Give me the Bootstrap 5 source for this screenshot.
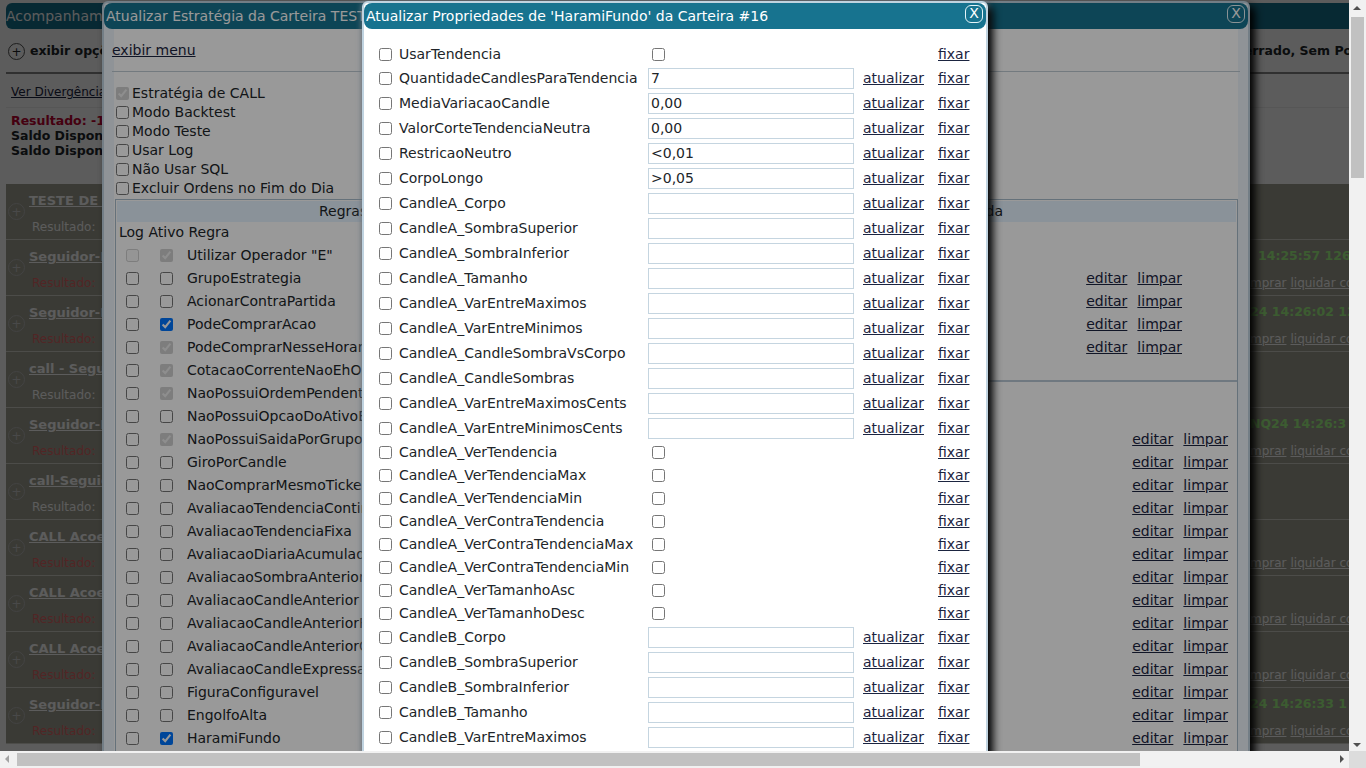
<!DOCTYPE html>
<html lang="pt-BR">

<head>
  <meta charset="UTF-8">
  <title>Acompanhamento</title>
  <link href="https://cdn.jsdelivr.net/npm/bootstrap@5.3.0/dist/css/bootstrap.min.css" rel="stylesheet">
  <style>
    html, body { height: 100%; overflow: hidden; }
    body { font-family: "DejaVu Sans", Verdana, sans-serif; font-size: 14px; color: #212529; background: #f1f1f1; }
    a { color: #1b2440; }
    input[type=checkbox] { width: 13px; height: 13px; margin: 0; flex: none; }

    #tela { width: 1366px; height: 768px; position: relative; overflow: hidden; }
    /* area visivel, sem as barras de rolagem */
    #area { width: 1349px; height: 751px; overflow: hidden; position: relative; background: #fff; }
    .veu { position: absolute; inset: 0; background: rgba(0, 0, 0, .4); }

    /* pagina de fundo */
    #pagina { width: 1349px; height: 751px; overflow: hidden; padding: 3px 0 0 6px; }
    .faixa-titulo { background: #17738f; color: #fff; height: 26px; line-height: 26px; border-radius: 6px 0 0 6px; white-space: nowrap; width: 1400px; }
    .barra-opcoes { height: 43px; padding: 2px 0 0 2px; font-weight: 700; white-space: nowrap; width: 1500px; font-size: 12.5px; }
    .barra-opcoes b { margin-left: 5px; }
    .status-mercado { margin-left: 1030px; }
    .bolinha { width: 17px; height: 17px; border: 1px solid #555; border-radius: 50%; display: inline-flex; align-items: center; justify-content: center; font-size: 12px; line-height: 1; font-weight: 400; flex: none; }
    .linha-grossa { height: 2px; background: #888; width: 1400px; }
    .divergencia { height: 34px; padding: 9px 0 0 5px; font-size: 12px; border-bottom: 1px solid #eee; }
    .resumo { height: 76px; padding: 5px 0 0 5px; font-size: 12.5px; font-weight: 700; line-height: 15px; }
    .resumo .negativo { color: #c00030; }
    .item-lista { height: 56px; width: 1400px; background: #a3a394; border-bottom: 1px solid #d4d4cc; color: #fff; position: relative; white-space: nowrap; }
    .item-lista .bolinha { position: absolute; left: 2px; top: 19px; border-color: #bbb; color: #ccc; }
    .item-lista .nome { position: absolute; left: 23px; top: 7px; font-size: 13px; font-weight: 700; }
    .item-lista .nome a { color: #fff; }
    .item-lista .res { position: absolute; left: 26px; top: 34px; font-size: 12px; color: #fff; }
    .item-lista .res.ruim { color: #e36a6a; }
    .item-lista .hora { position: absolute; top: 7px; font-size: 12.5px; font-weight: 700; color: #a8ff8a; }
    .item-lista .acoes { position: absolute; left: 1230px; top: 34px; font-size: 12px; }
    .item-lista .acoes a { color: #fff; margin-right: 4px; }

    /* janelas */
    .janela { position: absolute; top: 1px; bottom: -20px; background: #fff; border: 2px solid #c0d3e0; border-radius: 6px 6px 0 0; box-shadow: 5px 5px 8px #000, 0 0 6px #7d8b96; }
    .janela-titulo { background: #17738f; color: #fff; height: 26px; line-height: 26px; border-radius: 8px; padding-left: 2px; white-space: nowrap; overflow: hidden; position: relative; }
    .botao-x { position: absolute; right: 3px; top: 2px; width: 18px; height: 18px; border: 1px solid #e4f4f8; border-radius: 6px; color: #fff; font-size: 14px; line-height: 15px; text-align: center; background: #17738f; }

    #janelaEstrategia { left: 102px; width: 1148px; box-shadow: inset 10px 0 0 #eef6fc, inset -10px 0 0 #eef6fc, 5px 5px 8px #000; }
    .exibir-menu { padding: 11px 0 0 8px; height: 42px; }
    .janela-hr { height: 1px; background: #c0ccd4; margin: 0 8px 0 8px; }
    .opcoes-estrategia { padding: 12px 0 0 12px; line-height: 19px; }
    .opcoes-estrategia label { display: flex; align-items: center; gap: 3px; height: 19px; }
    .quadro-regras { margin: 1px 10px 0 11px; border: 1px solid #a9bccb; height: 700px; background: #fff; }
    .cab-regras { background: #e6f3ff; height: 21px; margin: 1px 1px 0 1px; line-height: 20px; }
    .cab-entrada { width: 532px; padding-left: 202px; white-space: nowrap; }
    .cab-saida { flex-grow: 1; text-align: right; padding-right: 233px; }
    .cab-colunas { padding: 0 0 0 3px; height: 22px; white-space: nowrap; }
    .coluna-regras { width: 532px; flex: none; overflow: hidden; }
    .coluna-acoes { flex-grow: 1; }
    .linha-regra { display: flex; align-items: center; height: 23px; white-space: nowrap; }
    .linha-regra .chk-log { margin-left: 10px; }
    .linha-regra .chk-ativo { margin-left: 21px; }
    .linha-regra .nome-regra { margin-left: 14px; }
    .acoes-regra { display: flex; justify-content: flex-end; align-items: center; height: 23px; gap: 10px; }
    .bloco-a { padding: 45px 55px 0 0; }
    .bloco-b { padding: 46px 9px 0 0; }
    .separador-b { height: 2px; background: #b9c9d6; margin: 21px 0 0 0; }

    #janelaPropriedades { left: 362px; width: 626px; }
    .propriedades { padding: 13px 0 0 15px; }
    .linha-prop { display: flex; align-items: center; height: 25px; white-space: nowrap; }
    .linha-prop.baixa { height: 23px; }
    .linha-prop.primeira { height: 24px; }
    .linha-prop .rotulo { width: 249px; flex: none; }
    .linha-prop .chk-item { margin-right: 7px; }
    .linha-prop .valor { width: 206px; height: 21px; border: 1px solid #c5d5e0; padding: 0 2px; font: inherit; color: inherit; outline: 0; flex: none; }
    .linha-prop .valor-chk { width: 206px; padding-left: 4px; display: flex; flex: none; }
    .linha-prop .atualizar { width: 75px; margin-left: 9px; flex: none; }

    /* barras de rolagem */
    .rolagem-v { position: absolute; right: 0; top: 0; width: 17px; height: 751px; background: #f1f1f1; }
    .rolagem-v i { position: absolute; left: 2px; top: 17px; width: 13px; height: 161px; background: #c1c1c1; }
    .rolagem-h { position: absolute; left: 0; bottom: 0; width: 1349px; height: 17px; background: #f1f1f1; }
    .rolagem-h i { position: absolute; left: 17px; top: 2px; width: 1123px; height: 13px; background: #c1c1c1; }
    .canto { position: absolute; right: 0; bottom: 0; width: 17px; height: 17px; background: #dcdcdc; }
    .seta { position: absolute; width: 0; height: 0; border: 4px solid transparent; }
  </style>
</head>

<body>
  <div id="tela">
    <div id="area">
      <div id="pagina">
        <div class="faixa-titulo">Acompanhamento</div>
        <div class="barra-opcoes d-flex align-items-center">
          <span class="bolinha">+</span><b>exibir opções</b>
          <span class="status-mercado">Mercado Encerrado, Sem Posições</span>
        </div>
        <div class="linha-grossa"></div>
        <div class="divergencia"><a href="#">Ver Divergências</a></div>
        <div class="resumo">
          <div class="negativo">Resultado: -1.250,00</div>
          <div>Saldo Disponível</div>
          <div>Saldo Disponível</div>
        </div>
        <div id="listaCarteiras"></div>
      </div>
      <div class="veu"></div>

      <div class="janela" id="janelaEstrategia">
        <div class="janela-titulo">Atualizar Estratégia da Carteira TESTE DE SEGUIDOR<span class="botao-x">X</span></div>
        <div class="exibir-menu"><a href="#">exibir menu</a></div>
        <div class="janela-hr"></div>
        <div class="opcoes-estrategia" id="opcoesEstrategia"></div>
        <div class="quadro-regras">
          <div class="cab-regras d-flex">
            <div class="cab-entrada">Regras de Entrada</div>
            <div class="cab-saida">Regras de Saída</div>
          </div>
          <div class="d-flex">
            <div class="coluna-regras">
              <div class="cab-colunas">Log Ativo Regra</div>
              <div id="regrasEsquerda"></div>
            </div>
            <div class="coluna-acoes">
              <div class="bloco-a" id="acoesA"></div>
              <div class="separador-b"></div>
              <div class="bloco-b" id="acoesB"></div>
            </div>
          </div>
        </div>
      </div>
      <div class="veu"></div>

      <div class="janela" id="janelaPropriedades">
        <div class="janela-titulo">Atualizar Propriedades de 'HaramiFundo' da Carteira #16<span class="botao-x">X</span></div>
        <div class="propriedades" id="listaProps"></div>
      </div>
    </div>

    <div class="rolagem-v"><span class="seta" style="left:4px;top:2px;border-bottom-color:#505050"></span><i></i><span class="seta" style="left:4px;bottom:0;border-top-color:#505050"></span></div>
    <div class="rolagem-h"><span class="seta" style="left:1px;top:4px;border-right-color:#a3a3a3"></span><i></i><span class="seta" style="right:1px;top:4px;border-left-color:#505050"></span></div>
    <div class="canto"></div>
  </div>

  <script src="https://cdn.jsdelivr.net/npm/bootstrap@5.3.0/dist/js/bootstrap.bundle.min.js"></script>
  <script>
    // carteiras da pagina de fundo
    const carteiras = [
      ["TESTE DE SEGUIDOR", 0, "", 0],
      ["Seguidor-BOVA", 1, "14:25:57 126.", 1258],
      ["Seguidor-BOVB", 1, "24 14:26:02 12", 1250],
      ["call - Seguidor", 0, "", 0],
      ["Seguidor-BOVC", 1, "NQ24 14:26:3", 1250],
      ["call-Seguidor", 0, "", 0],
      ["CALL Acoes", 1, "", 0],
      ["CALL Acoes", 1, "", 0],
      ["CALL Acoes", 1, "", 0],
      ["Seguidor-BOVD", 1, "24 14:26:33 1", 1250]
    ];
    document.getElementById("listaCarteiras").innerHTML = carteiras.map(c =>
      `<div class="item-lista"><span class="bolinha">+</span>
        <span class="nome"><a href="#">${c[0]}</a></span>
        <span class="res ${c[1] ? "ruim" : ""}">Resultado:</span>
        ${c[2] ? `<span class="hora" style="left:${c[3] - 6}px">${c[2]}</span>` : ""}
        ${c[1] ? `<span class="acoes"><a href="#">comprar</a><a href="#">liquidar cota</a></span>` : ""}
      </div>`).join("");

    document.getElementById("opcoesEstrategia").innerHTML = [
      ["Estratégia de CALL", "checked disabled"], ["Modo Backtest", ""], ["Modo Teste", ""],
      ["Usar Log", ""], ["Não Usar SQL", ""], ["Excluir Ordens no Fim do Dia", ""]
    ].map(o => `<label><input type="checkbox" ${o[1]}>${o[0]}</label>`).join("");

    // regras: nome, estado do ativo
    const regras = [
      ["Utilizar Operador \"E\"", "checked disabled"], ["GrupoEstrategia", ""], ["AcionarContraPartida", ""],
      ["PodeComprarAcao", "checked"], ["PodeComprarNesseHorario", "checked disabled"],
      ["CotacaoCorrenteNaoEhOutlier", "checked disabled"], ["NaoPossuiOrdemPendente", "checked disabled"],
      ["NaoPossuiOpcaoDoAtivoEmCarteira", ""], ["NaoPossuiSaidaPorGrupo", "checked disabled"],
      ["GiroPorCandle", ""], ["NaoComprarMesmoTicker", ""], ["AvaliacaoTendenciaContinua", ""],
      ["AvaliacaoTendenciaFixa", ""], ["AvaliacaoDiariaAcumulada", ""], ["AvaliacaoSombraAnterior", ""],
      ["AvaliacaoCandleAnterior", ""], ["AvaliacaoCandleAnteriorFixa", ""], ["AvaliacaoCandleAnteriorCorpo", ""],
      ["AvaliacaoCandleExpressao", ""], ["FiguraConfiguravel", ""], ["EngolfoAlta", ""], ["HaramiFundo", "checked"]
    ];
    document.getElementById("regrasEsquerda").innerHTML = regras.map((r, i) =>
      `<div class="linha-regra"><input class="chk-log" type="checkbox" ${i == 0 ? "disabled" : ""}>
        <input class="chk-ativo" type="checkbox" ${r[1]}><span class="nome-regra">${r[0]}</span></div>`).join("");

    const editarLimpar = `<div class="acoes-regra"><a href="#">editar</a><a href="#">limpar</a></div>`;
    document.getElementById("acoesA").innerHTML = editarLimpar.repeat(4);
    document.getElementById("acoesB").innerHTML = editarLimpar.repeat(14);

    // propriedades: nome, tipo (t = texto, c = checkbox), valor
    const props = [
      ["UsarTendencia", "c"], ["QuantidadeCandlesParaTendencia", "t", "7"], ["MediaVariacaoCandle", "t", "0,00"],
      ["ValorCorteTendenciaNeutra", "t", "0,00"], ["RestricaoNeutro", "t", "<0,01"], ["CorpoLongo", "t", ">0,05"],
      ["CandleA_Corpo", "t"], ["CandleA_SombraSuperior", "t"], ["CandleA_SombraInferior", "t"], ["CandleA_Tamanho", "t"],
      ["CandleA_VarEntreMaximos", "t"], ["CandleA_VarEntreMinimos", "t"], ["CandleA_CandleSombraVsCorpo", "t"],
      ["CandleA_CandleSombras", "t"], ["CandleA_VarEntreMaximosCents", "t"], ["CandleA_VarEntreMinimosCents", "t"],
      ["CandleA_VerTendencia", "c"], ["CandleA_VerTendenciaMax", "c"], ["CandleA_VerTendenciaMin", "c"],
      ["CandleA_VerContraTendencia", "c"], ["CandleA_VerContraTendenciaMax", "c"], ["CandleA_VerContraTendenciaMin", "c"],
      ["CandleA_VerTamanhoAsc", "c"], ["CandleA_VerTamanhoDesc", "c"], ["CandleB_Corpo", "t"], ["CandleB_SombraSuperior", "t"],
      ["CandleB_SombraInferior", "t"], ["CandleB_Tamanho", "t"], ["CandleB_VarEntreMaximos", "t"]
    ];
    document.getElementById("listaProps").innerHTML = props.map((p, i) => {
      const texto = p[1] == "t";
      const valor = (p[2] || "").replace("<", "&lt;").replace(">", "&gt;");
      return `<div class="linha-prop ${texto ? "" : "baixa"} ${i == 0 ? "primeira" : ""}">
        <input class="chk-item" type="checkbox"><span class="rotulo">${p[0]}</span>
        ${texto ? `<input class="valor" type="text" value="${valor}">` : `<span class="valor-chk"><input type="checkbox"></span>`}
        <span class="atualizar">${texto ? `<a href="#">atualizar</a>` : ""}</span><a href="#">fixar</a>
      </div>`;
    }).join("");
  </script>
</body>

</html>
